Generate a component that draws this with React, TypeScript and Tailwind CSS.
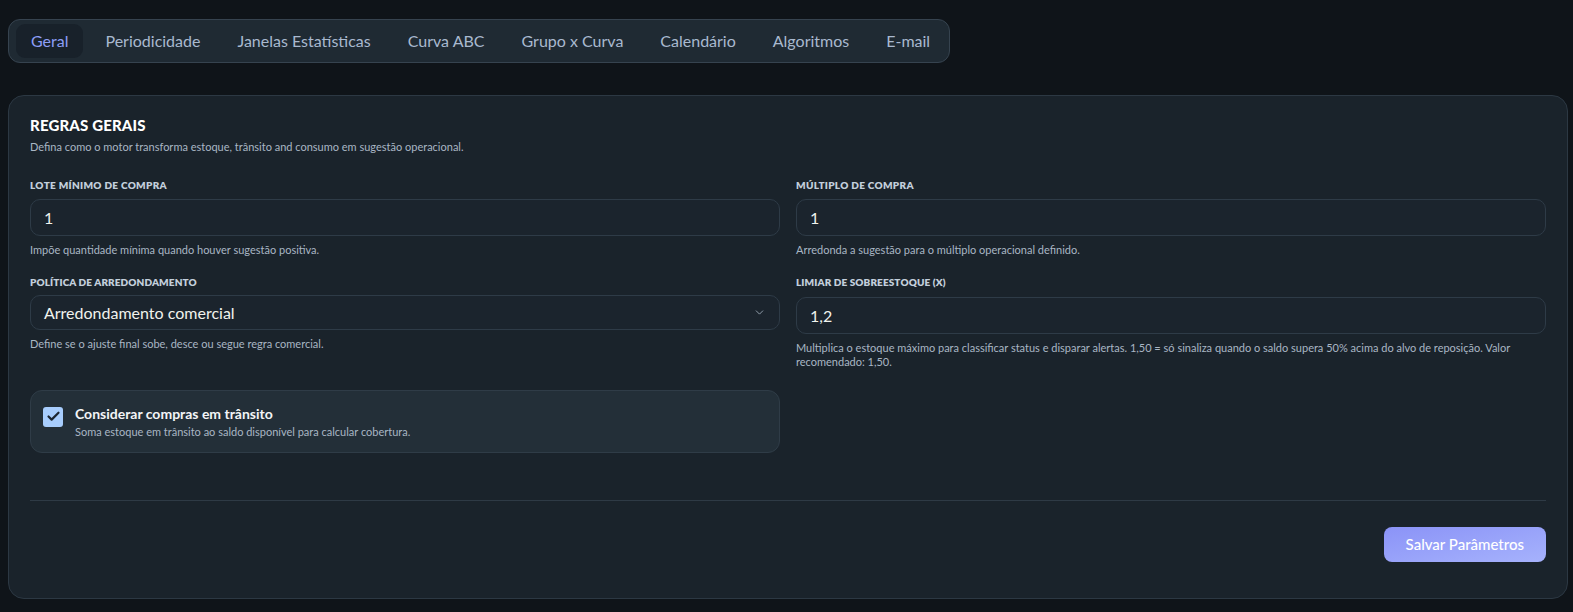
import React, { useState } from 'react';
import { Check, ChevronDown } from 'lucide-react';

const tabs = ['Geral', 'Periodicidade', 'Janelas Estatísticas', 'Curva ABC', 'Grupo x Curva', 'Calendário', 'Algoritmos', 'E-mail'];

function Field({ label, value, hint }: { label: string; value: string; hint: string }) {
  return (
    <div className="flex flex-col">
      <label className="text-[10px] font-extrabold uppercase tracking-[0.03em] text-[#c3cfdc] mb-[6px]">{label}</label>
      <input
        defaultValue={value}
        className="h-[37px] rounded-[10px] border border-[#2e3b47] bg-[#1b242d] px-[13px] text-[16px] text-[#f1f3ee] outline-none"
      />
      <p className="mt-[6px] text-[11px] leading-[15px] text-[#a9b6c4]">{hint}</p>
    </div>
  );
}

export default function App() {
  const [active, setActive] = useState('Geral');
  const [transit, setTransit] = useState(true);

  return (
    <div className="min-h-[612px] bg-[#0f1419] pl-[8px] pr-[5px] pt-[19px] pb-[14px] font-['Lato',sans-serif]">
      {/* Tabs */}
      <div className="inline-flex items-center gap-[7px] rounded-[12px] border border-[#36434f] bg-[#1f2a33] p-[4px] pl-[7px]">
        {tabs.map((t) => (
          <button
            key={t}
            onClick={() => setActive(t)}
            className={`h-[34px] rounded-[9px] px-[15px] text-[16px] ${
              active === t ? 'bg-[#18212a] text-[#8d9ef6]' : 'text-[#a9b9cf]'
            }`}
          >
            {t}
          </button>
        ))}
      </div>

      {/* Card */}
      <div className="mt-[32px] rounded-[16px] border border-[#2c3843] bg-[#1a232b] px-[21px] pt-[18px] pb-[36px]">
        <h2 className="text-[15px] font-black tracking-[0.01em] text-white">REGRAS GERAIS</h2>
        <p className="mt-[2px] text-[11px] text-[#a9b6c4]">
          Defina como o motor transforma estoque, trânsito and consumo em sugestão operacional.
        </p>

        <div className="mt-[23px] grid grid-cols-2 gap-x-[16px] gap-y-[18px]">
          <Field label="Lote mínimo de compra" value="1" hint="Impõe quantidade mínima quando houver sugestão positiva." />
          <Field label="Múltiplo de compra" value="1" hint="Arredonda a sugestão para o múltiplo operacional definido." />

          <div className="flex flex-col">
            <label className="text-[10px] font-extrabold uppercase tracking-[0.01em] text-[#c3cfdc] mb-[5px]">Política de arredondamento</label>
            <div className="flex h-[35px] items-center justify-between rounded-[10px] border border-[#2e3b47] bg-[#1b242d] px-[13px]">
              <span className="text-[16px] text-[#f1f3ee]">Arredondamento comercial</span>
              <ChevronDown className="h-[13px] w-[13px] text-[#a9b6c4]" strokeWidth={1.5} />
            </div>
            <p className="mt-[6px] text-[11px] text-[#a9b6c4]">Define se o ajuste final sobe, desce ou segue regra comercial.</p>

            <div
              onClick={() => setTransit(!transit)}
              className="mt-[37px] flex cursor-pointer items-start gap-[12px] rounded-[12px] border border-[#2f3c47] bg-[#232f38] px-[12px] py-[12px]"
            >
              <span className="mt-[4px] flex h-[20px] w-[20px] items-center justify-center rounded-[3px] bg-[#a7cdfd]">
                {transit && <Check className="h-[15px] w-[15px] text-[#1c2631]" strokeWidth={3.5} />}
              </span>
              <div>
                <div className="text-[14px] font-bold text-[#f3f5f7]">Considerar compras em trânsito</div>
                <div className="text-[11px] text-[#a9b6c4]">Soma estoque em trânsito ao saldo disponível para calcular cobertura.</div>
              </div>
            </div>
          </div>

          <div className="flex flex-col">
            <label className="text-[10px] font-extrabold uppercase tracking-[0.01em] text-[#c3cfdc] mb-[7px]">Limiar de sobreestoque (x)</label>
            <input
              defaultValue="1,2"
              className="h-[37px] rounded-[10px] border border-[#2e3b47] bg-[#1b242d] px-[13px] text-[16px] text-[#f1f3ee] outline-none"
            />
            <p className="mt-[7px] text-[11px] leading-[14px] text-[#a9b6c4]">
              Multiplica o estoque máximo para classificar status e disparar alertas. 1,50 = só sinaliza quando o saldo supera 50% acima do alvo de reposição. Valor recomendado: 1,50.
            </p>
          </div>
        </div>

        <div className="mt-[47px] border-t border-[#2e3a45]" />

        <div className="mt-[26px] flex justify-end">
          <button className="h-[35px] rounded-[8px] bg-gradient-to-br from-[#8b93f7] to-[#a6b2fc] px-[22px] text-[15px] font-medium text-white">
            Salvar Parâmetros
          </button>
        </div>
      </div>
    </div>
  );
}
